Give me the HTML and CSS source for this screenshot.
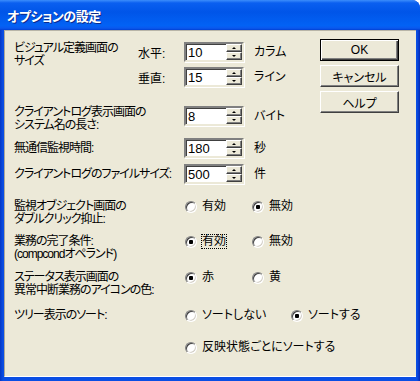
FILE: index.html
```html
<!DOCTYPE html>
<html lang="ja">
<head>
    <meta charset="UTF-8">
    <title>オプションの設定</title>
    <link rel="stylesheet" href="styles.css">
</head>
<body>

<div class="window">
    <div class="titlebar"><span class="title">オプションの設定</span></div>
    <div class="frame">
        <div class="panel">

            <form class="options">
                <div class="row row-size">
                    <div class="label label-narrow">ビジュアル定義画面の<br>サイズ</div>
                    <div class="subrows">
                        <div class="subrow">
                            <span class="sublabel">水平:</span>
                            <span class="spin"><span class="spin-value">10</span><span class="spin-btns"><span class="spin-up"></span><span class="spin-down"></span></span></span>
                            <span class="unit">カラム</span>
                        </div>
                        <div class="subrow">
                            <span class="sublabel">垂直:</span>
                            <span class="spin"><span class="spin-value">15</span><span class="spin-btns"><span class="spin-up"></span><span class="spin-down"></span></span></span>
                            <span class="unit">ライン</span>
                        </div>
                    </div>
                </div>

                <div class="row row-len">
                    <div class="label">クライアントログ表示画面の<br>システム名の長さ:</div>
                    <span class="spin"><span class="spin-value">8</span><span class="spin-btns"><span class="spin-up"></span><span class="spin-down"></span></span></span>
                    <span class="unit">バイト</span>
                </div>

                <div class="row row-single">
                    <div class="label">無通信監視時間:</div>
                    <span class="spin"><span class="spin-value">180</span><span class="spin-btns"><span class="spin-up"></span><span class="spin-down"></span></span></span>
                    <span class="unit">秒</span>
                </div>

                <div class="row row-single">
                    <div class="label">クライアントログのファイルサイズ:</div>
                    <span class="spin"><span class="spin-value">500</span><span class="spin-btns"><span class="spin-up"></span><span class="spin-down"></span></span></span>
                    <span class="unit">件</span>
                </div>

                <div class="row radio-row row-dblclick">
                    <div class="label">監視オブジェクト画面の<br>ダブルクリック抑止:</div>
                    <label class="opt"><input type="radio" name="dbl"><span>有効</span></label>
                    <label class="opt"><input type="radio" name="dbl" checked><span>無効</span></label>
                </div>

                <div class="row radio-row row-complete">
                    <div class="label">業務の完了条件:<br>(compcondオペランド)</div>
                    <label class="opt"><input type="radio" name="comp" checked><span class="focused">有効</span></label>
                    <label class="opt"><input type="radio" name="comp"><span>無効</span></label>
                </div>

                <div class="row radio-row row-color">
                    <div class="label">ステータス表示画面の<br>異常中断業務のアイコンの色:</div>
                    <label class="opt"><input type="radio" name="color" checked><span>赤</span></label>
                    <label class="opt"><input type="radio" name="color"><span>黄</span></label>
                </div>

                <div class="row radio-row row-sort">
                    <div class="label">ツリー表示のソート:</div>
                    <label class="opt opt-wide"><input type="radio" name="sort"><span>ソートしない</span></label>
                    <label class="opt"><input type="radio" name="sort" checked><span>ソートする</span></label>
                </div>

                <div class="row radio-row row-sort2">
                    <div class="label"></div>
                    <label class="opt"><input type="radio" name="sort"><span>反映状態ごとにソートする</span></label>
                </div>
            </form>

            <div class="buttons">
                <button type="button" class="btn btn-default">OK</button>
                <button type="button" class="btn">キャンセル</button>
                <button type="button" class="btn">ヘルプ</button>
            </div>

        </div>
    </div>
</div>

</body>
</html>
```

FILE: styles.css
```css
body {
    margin: 0;
    background-color: #fff;
    font-family: "Liberation Sans", "Noto Sans CJK JP", sans-serif;
    font-size: 12px;
    font-feature-settings: "palt";
    color: #000;
}

.window {
    width: 420px;
    height: 381px;
    display: flex;
    flex-direction: column;
    border-radius: 0 8px 0 0;
    overflow: hidden;
    background-color: #0a44dc;
}

.titlebar {
    height: 30px;
    flex: none;
    display: flex;
    align-items: center;
    padding-left: 7px;
    background: linear-gradient(180deg, #3c8dfb 0%, #0a5ff0 10%, #0055e8 40%, #0262f5 85%, #0a58ee 94%, #0040d4 100%);
}

.title {
    color: #fff;
    font-weight: bold;
    font-size: 13px;
    letter-spacing: -0.5px;
    text-shadow: 1px 1px 0 #0b2a8c;
}

.frame {
    flex: 1;
    min-height: 0;
    display: flex;
    padding: 0 4px 4px 4px;
    background: linear-gradient(90deg, #0637c4 0, #0a4ee4 3px, #0a4ee4 calc(100% - 3px), #0428b4 100%);
}

.panel {
    flex: 1;
    min-height: 0;
    display: flex;
    overflow: hidden;
    background-color: #ece9d8;
    border-top: 1px solid #b8b5a8;
    border-left: 1px solid #aca899;
    border-bottom: 1px solid #fff;
}

/* form side */

.options {
    width: 315px;
    flex: none;
    box-sizing: border-box;
    padding: 11px 0 0 9px;
    display: flex;
    flex-direction: column;
}

.row {
    display: flex;
    align-items: flex-start;
    white-space: nowrap;
}

.label {
    width: 170px;
    flex: none;
    line-height: 13px;
    letter-spacing: -1px;
    white-space: nowrap;
}

.label-narrow {
    width: 124px;
}

.subrows {
    display: flex;
    flex-direction: column;
    gap: 5px;
}

.subrow {
    display: flex;
    align-items: center;
}

.sublabel {
    width: 46px;
}

.unit {
    margin-left: 10px;
    line-height: 20px;
}

.row-len {
    margin-top: 19px;
}

.row-single {
    margin-top: 6px;
    align-items: center;
}

/* spin box */

.spin {
    width: 60px;
    height: 20px;
    box-sizing: border-box;
    display: flex;
    background-color: #fff;
    border-style: solid;
    border-width: 2px;
    border-color: #808080 #ece9d8 #ece9d8 #808080;
    box-shadow: inset 1px 1px 0 #404040, 1px 1px 0 #fff;
    flex: none;
}

.spin-value {
    flex: 1;
    padding: 1px 0 0 2px;
    font-size: 13px;
    line-height: 15px;
}

.spin-btns {
    width: 16px;
    display: flex;
    flex-direction: column;
}

.spin-up,
.spin-down {
    flex: 1;
    position: relative;
    background-color: #ece9d8;
    border-style: solid;
    border-width: 1px;
    border-color: #fff #404040 #404040 #fff;
    box-shadow: inset -1px -1px 0 #808080;
}

.spin-up::after,
.spin-down::after {
    content: "";
    position: absolute;
    left: 5px;
    top: 2px;
    border-left: 2px solid transparent;
    border-right: 2px solid transparent;
}

.spin-up::after {
    border-bottom: 2px solid #000;
}

.spin-down::after {
    border-top: 2px solid #000;
}

/* radio rows */

.row-dblclick {
    margin-top: 16px;
}

.row-complete {
    margin-top: 9px;
}

.row-color {
    margin-top: 10px;
}

.row-sort {
    margin-top: 12px;
}

.row-sort2 {
    margin-top: 19px;
}

.opt {
    display: flex;
    align-items: center;
    width: 67px;
    flex: none;
    line-height: 13px;
    white-space: nowrap;
}

.opt-wide {
    width: 106px;
}

.opt input {
    appearance: none;
    -webkit-appearance: none;
    width: 12px;
    height: 12px;
    margin: 0 5px 0 1px;
    flex: none;
    border-radius: 50%;
    background-color: #fff;
    border: 1px solid;
    border-color: #808080 #fff #fff #808080;
    box-shadow: inset 1px 1px 0 #404040, inset -1px -1px 0 #d4d0c8;
    box-sizing: border-box;
}

.opt input:checked {
    background: radial-gradient(circle, #000 0, #000 2px, #fff 2.5px);
}

.focused {
    outline: 1px dotted #000;
    outline-offset: 0;
}

/* buttons */

.buttons {
    flex: none;
    padding-top: 8px;
    display: flex;
    flex-direction: column;
    gap: 4px;
}

.btn {
    width: 79px;
    height: 22px;
    padding: 0;
    font-family: "Liberation Sans", "Noto Sans CJK JP", sans-serif;
    font-size: 12px;
    font-feature-settings: "palt";
    background-color: #ece9d8;
    border-style: solid;
    border-width: 1px;
    border-color: #fff #404040 #404040 #fff;
    box-shadow: inset -1px -1px 0 #808080;
}

.btn-default {
    border: 1px solid #000;
    box-shadow: inset 1px 1px 0 #fff, inset -1px -1px 0 #404040, inset -2px -2px 0 #808080;
}
```
